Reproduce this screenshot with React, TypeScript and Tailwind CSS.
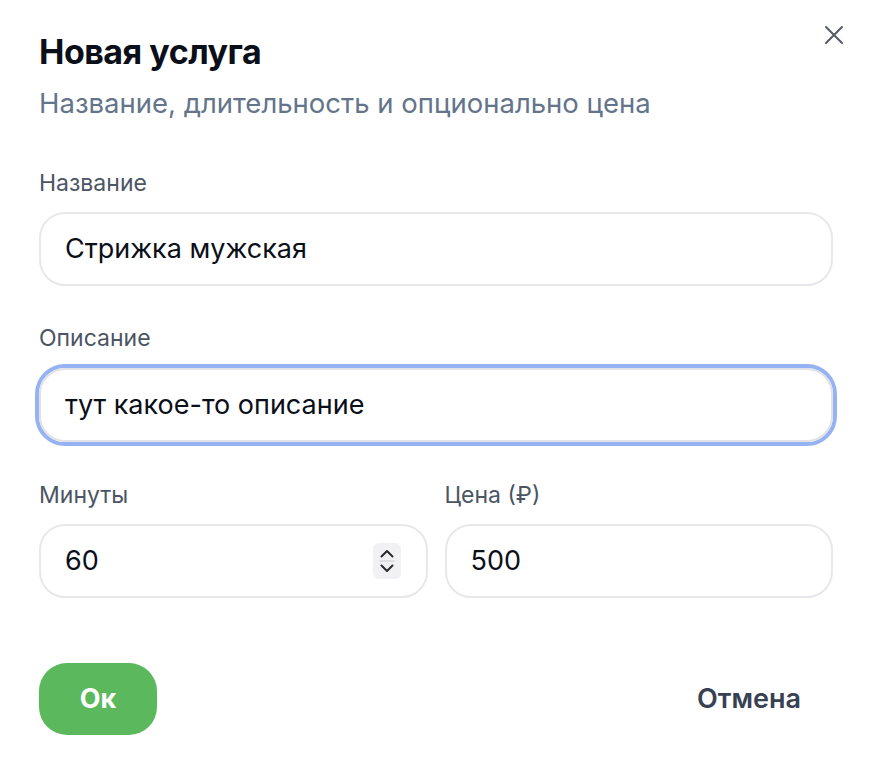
import React from "react";

function Spinner() {
  return (
    <div className="flex h-[36px] w-[28px] flex-col items-center justify-center rounded-md bg-[#f1f1f3]">
      <svg width="18" height="32" viewBox="0 0 18 32" fill="none" stroke="#2b2b2e" strokeWidth="2" strokeLinecap="round" strokeLinejoin="round">
        <path d="M3.5 11.5 L9 6 L14.5 11.5" />
        <line x1="2" y1="16" x2="16" y2="16" stroke="#d9d9dd" strokeWidth="1.5" />
        <path d="M3.5 20.5 L9 26 L14.5 20.5" />
      </svg>
    </div>
  );
}

export default function App() {
  return (
    <div
      className="relative h-[766px] w-[874px] bg-white pl-[39px] pr-[41px] pt-[32px] text-[#0b0f19]"
      style={{ fontFamily: "Inter, 'Noto Sans', sans-serif" }}
    >
      <button className="absolute right-[30px] top-[25px] text-[#555a66]">
        <svg width="20" height="20" viewBox="0 0 20 20" fill="none" stroke="currentColor" strokeWidth="2" strokeLinecap="round">
          <path d="M2 2 L18 18 M18 2 L2 18" />
        </svg>
      </button>

      <h1 className="text-[34px] font-bold leading-[40px] tracking-[-0.5px]">Новая услуга</h1>
      <p className="mt-[15px] text-[27.5px] leading-[32px] text-[#64748b]">
        Название, длительность и опционально цена
      </p>

      <div className="mt-[50px] flex flex-col">
        <label className="text-[23px] leading-[28px] text-[#4b5563]">Название</label>
        <div className="mt-[15px] flex h-[74px] items-center rounded-[26px] border-2 border-[#e8e8ec] px-[24px] text-[27px]">
          Стрижка мужская
        </div>
      </div>

      <div className="mt-[38px] flex flex-col">
        <label className="text-[23px] leading-[28px] text-[#4b5563]">Описание</label>
        <div className="-mx-[4px] mt-[12px] rounded-[30px] border-[4px] border-[#95b3f3]">
          <div className="flex h-[74px] items-center rounded-[26px] border-2 border-[#e2e2e6] px-[24px] text-[27px]">
            тут какое-то описание
          </div>
        </div>
      </div>

      <div className="mt-[35px] grid grid-cols-2 gap-[17px]">
        <div className="flex flex-col">
          <label className="text-[23px] leading-[28px] text-[#4b5563]">Минуты</label>
          <div className="mt-[15px] flex h-[74px] items-center justify-between rounded-[26px] border-2 border-[#e8e8ec] pl-[24px] pr-[25px] text-[27px]">
            <span>60</span>
            <Spinner />
          </div>
        </div>
        <div className="flex flex-col">
          <label className="text-[23px] leading-[28px] text-[#4b5563]">Цена (₽)</label>
          <div className="mt-[15px] flex h-[74px] items-center rounded-[26px] border-2 border-[#e8e8ec] px-[24px] text-[27px]">
            500
          </div>
        </div>
      </div>

      <div className="mt-[65px] flex items-center justify-between">
        <button className="flex h-[72px] w-[118px] items-center justify-center rounded-[28px] bg-[#5cb85c] text-[27px] font-bold text-white">
          Ок
        </button>
        <button className="mr-[32px] text-[27px] font-semibold text-[#374151]">Отмена</button>
      </div>
    </div>
  );
}
